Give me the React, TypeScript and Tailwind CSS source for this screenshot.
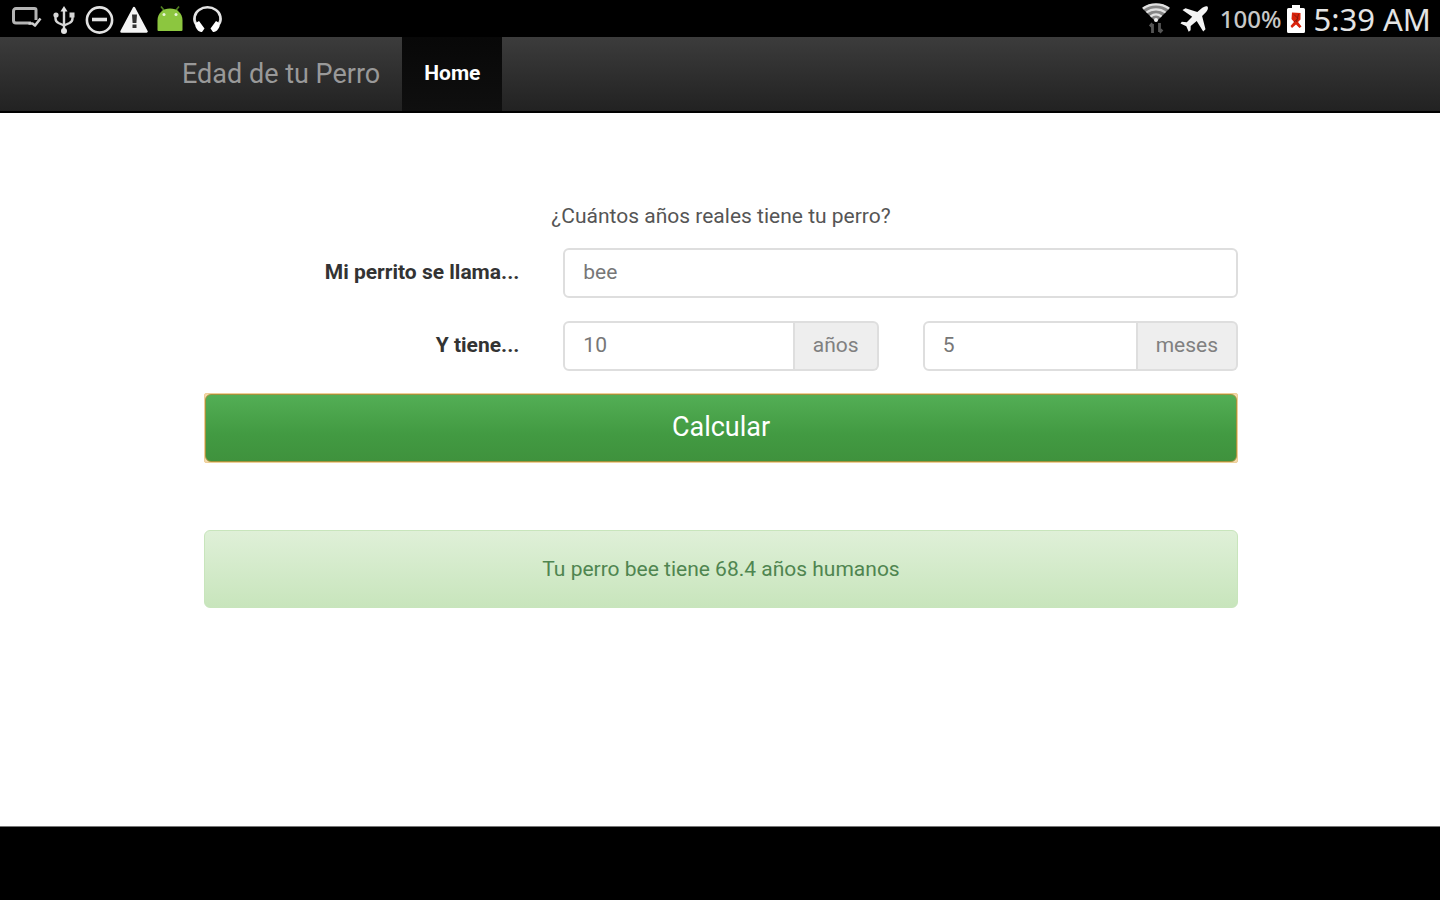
import { useState } from "react";

function CastIcon() {
  return (
    <svg className="h-7 w-8" viewBox="0 0 32 28" fill="none" strokeLinejoin="round" aria-hidden="true">
      <path d="M19 17H4a2.500 2.500 0 0 1-2.500-2.500V5A2.500 2.500 0 0 1 4 2.500h18.500A1.500 1.500 0 0 1 24 4v10" stroke="#b4b4b4" strokeWidth="3" />
      <path d="M16.500 17.500h4l2.500 2 5.500-7" stroke="#d0d0d0" strokeWidth="2.600" />
    </svg>
  );
}

function UsbIcon() {
  return (
    <svg className="h-7 w-6" viewBox="0 0 24 28" fill="none" stroke="#d6d6d6" strokeWidth="2.400" aria-hidden="true">
      <path d="M12 4v20M3.500 9v3.500c0 2.500 1 3.500 3 4.500l5.500 2.500M20.500 9v3.500c0 2.500-1 3.500-3 4.500L12 19.500" />
      <path d="M12 0l3.500 5.500h-7z" fill="#e2e2e2" stroke="none" />
      <circle cx="4" cy="9" r="2.600" fill="#d6d6d6" stroke="none" />
      <path d="M17.500 6.500h5v5h-5z" fill="#d6d6d6" stroke="none" />
      <circle cx="12" cy="25" r="3" fill="#e2e2e2" stroke="none" />
    </svg>
  );
}

function BlockIcon() {
  return (
    <svg className="h-7 w-8" viewBox="0 0 32 28" fill="none" stroke="#e2e2e2" aria-hidden="true">
      <circle cx="15.500" cy="14" r="12.600" strokeWidth="2.600" />
      <path d="M8 13.500h15" strokeWidth="3.600" />
    </svg>
  );
}

function WarningIcon() {
  return (
    <svg className="h-7 w-7" viewBox="0 0 28 28" aria-hidden="true">
      <path d="M14 2L26.500 25.500h-25z" fill="#f4f4f4" stroke="#f4f4f4" strokeWidth="2.500" strokeLinejoin="round" />
      <path d="M12 8.500h5l-.6 8.500h-3.800zM12.500 18.500h4V22h-4z" fill="#333" />
    </svg>
  );
}

function AndroidIcon() {
  return (
    <svg className="h-7 w-7" viewBox="0 0 28 28" aria-hidden="true">
      <path d="M5 .5l4 5M23 .5l-4 5" stroke="#4f7d20" strokeWidth="1.600" />
      <path d="M1.500 14.500C1.500 7 7 2.500 14 2.500S26.500 7 26.500 14.500V24a1 1 0 0 1-1 1h-23a1 1 0 0 1-1-1z" fill="#8cc63f" />
      <circle cx="8" cy="8.500" r="1.500" fill="#e9f5d8" />
      <circle cx="20" cy="8.500" r="1.500" fill="#e9f5d8" />
    </svg>
  );
}

function HeadphonesIcon() {
  return (
    <svg className="h-7 w-8" viewBox="0 0 32 28" fill="none" aria-hidden="true">
      <path d="M4 18C1 13.500 2.500 7 7 4c5-3.600 12-3.600 17 0 4.500 3 6 9.500 3 14" stroke="#e4e4e4" strokeWidth="2.600" />
      <path d="M3 17.500l4-2.500 5.500 7.500-2.500 3.500c-3.500.5-7-4-7-8.500zM28 17.500L24 15l-5.500 7.500L21 26c3.500.5 7-4 7-8.500z" fill="#fff" />
    </svg>
  );
}

function WifiIcon() {
  return (
    <svg className="h-8 w-7" viewBox="0 0 28 32" aria-hidden="true">
      <path d="M0 5C7.500-.8 20.500-.8 28 5L14 19z" fill="#858585" />
      <path d="M1 5.500c7.500-5.500 18.500-5.500 26 0M4.500 9.500c5.500-4.300 13.500-4.300 19 0M8.500 13.500c3.500-2.600 7.500-2.600 11 0" fill="none" stroke="#e2e2e2" strokeWidth="2.200" />
      <circle cx="14" cy="17" r="2" fill="#eee" />
      <path d="M10.500 21v9M8 23.500l2.500-3M17.500 20v9M17.500 29.500l2.800-3" fill="none" stroke="#555" strokeWidth="2.800" />
    </svg>
  );
}

function PlaneIcon() {
  return (
    <svg className="h-7 w-7" viewBox="0 0 28 28" fill="#f4f4f4" aria-hidden="true">
      <path d="M27.500 1.500c-1.600-1-4 .2-5.800 1.800L17.300 7 5.500 3.200 2.500 5l9.700 6.800-5.400 5.500-5-.5-1.300 1.600 5.800 2.800 2.400 5.600 1.900-1.500.1-4.300 6-5 6.500 10.500 2.300-2.300-3.400-13.200 4-4c1.600-1.800 2.400-4.200 1.400-5.500z" />
    </svg>
  );
}

function BatteryIcon() {
  return (
    <svg className="h-7 w-5" viewBox="0 0 20 28" aria-hidden="true">
      <path d="M6 0h8v3h3.500A1.500 1.500 0 0 1 19 4.500v22a1.500 1.500 0 0 1-1.500 1.500h-15A1.500 1.500 0 0 1 1 26.500v-22A1.500 1.500 0 0 1 2.500 3H6z" fill="#fff" />
      <path d="M6 7.500l8.500.5v6.500L12 17l3.500 4.500-2 1.500-3.500-3.500-4 3.500-1.500-2 3.500-4L5.500 14z" fill="#d9230b" />
      <path d="M8 9.500l4 4-4 3.500M12.500 9l-2 8" fill="none" stroke="#8a1a0c" strokeWidth="1" />
    </svg>
  );
}

const fieldClass =
  "h-[50px] min-w-0 w-full border-2 border-[#dedede] bg-white px-[18px] pb-0.5 text-[21px] text-[#777] outline-none";
const addonClass =
  "flex items-center rounded-r-md border-2 border-l-0 border-[#dedede] bg-[#eee] px-[18px] text-[21px] text-[#808080]";
const labelClass = "pb-0.5 pr-[22px] text-right text-[21px] font-bold leading-[30px] text-[#333]";

export default function App() {
  const [name, setName] = useState("bee");
  const [years, setYears] = useState("10");
  const [months, setMonths] = useState("5");

  return (
    <div className="flex min-h-screen flex-col bg-white font-[Roboto,'Liberation_Sans',sans-serif]">
      <div className="flex h-[37px] items-center justify-between bg-black pl-3 pr-[9px] font-['Noto_Sans',sans-serif] text-[#e4e4e4]">
        <div className="flex items-center gap-2 pt-[3px]">
          <CastIcon />
          <UsbIcon />
          <div className="flex gap-1">
            <BlockIcon />
            <WarningIcon />
          </div>
          <AndroidIcon />
          <HeadphonesIcon />
        </div>
        <div className="flex items-center">
          <WifiIcon />
          <span className="flex pl-[10px] pr-3">
            <PlaneIcon />
          </span>
          <span className="text-2xl font-medium leading-7 text-[#c8c8c8]">100%</span>
          <span className="flex pl-1 pr-2">
            <BatteryIcon />
          </span>
          <span className="text-[31px] leading-8">5:39 AM</span>
        </div>
      </div>

      <header className="h-[76px] border-b-2 border-black bg-linear-to-b from-[#3c3c3c] to-[#222]">
        <nav className="mx-auto flex h-full max-w-[1124px] px-6">
          <a href="#" className="flex items-center pr-[22px] text-[27px] text-[#999]">
            Edad de tu Perro
          </a>
          <a href="#" className="flex items-center bg-linear-to-b from-[#080808] to-[#0f0f0f] px-[22px] text-[21px] font-bold text-white">
            Home
          </a>
        </nav>
      </header>

      <main className="mx-auto w-full max-w-[1124px] flex-1 pl-6 pr-[22px] pt-[88px]">
        <form onSubmit={(e) => e.preventDefault()}>
          <p className="text-center text-[21px] leading-[30px] text-[#555]">¿Cuántos años reales tiene tu perro?</p>

          <div className="mt-[17px] grid grid-cols-3 items-center">
            <label htmlFor="name" className={labelClass}>
              Mi perrito se llama...
            </label>
            <div className="col-span-2 px-[22px]">
              <input id="name" value={name} onChange={(e) => setName(e.target.value)} className={`${fieldClass} rounded-md`} />
            </div>
          </div>

          <div className="mt-[23px] grid grid-cols-3 items-center">
            <label htmlFor="years" className={labelClass}>
              Y tiene...
            </label>
            <div className="flex px-[22px]">
              <input id="years" value={years} onChange={(e) => setYears(e.target.value)} className={`${fieldClass} rounded-l-md`} />
              <label htmlFor="years" className={addonClass}>
                años
              </label>
            </div>
            <div className="flex px-[22px]">
              <input id="months" value={months} onChange={(e) => setMonths(e.target.value)} className={`${fieldClass} rounded-l-md`} />
              <label htmlFor="months" className={addonClass}>
                meses
              </label>
            </div>
          </div>

          <div className="mt-[22px] px-[22px]">
            <div className="rounded-xs border border-[#efcf98] bg-[#f3d9ac]">
              <button
                type="submit"
                className="block h-[68px] w-full rounded-md border border-[#a3933c] bg-linear-to-b from-[#53ae55] via-[#429a42] via-60% to-[#3f923d] pb-0.5 text-[27px] leading-[36px] text-white"
              >
                Calcular
              </button>
            </div>
          </div>
        </form>

        <div className="mt-[67px] px-[22px]">
          <output className="block rounded-md border border-[#c8e5bc] bg-linear-to-b from-[#dff0d8] to-[#c8e5bc] py-[23px] text-center text-[21px] leading-[30px] text-[#4f8550]">
            Tu perro bee tiene 68.4 años humanos
          </output>
        </div>
      </main>

      <footer className="h-[74px] border-t border-[#777] bg-black" />
    </div>
  );
}
